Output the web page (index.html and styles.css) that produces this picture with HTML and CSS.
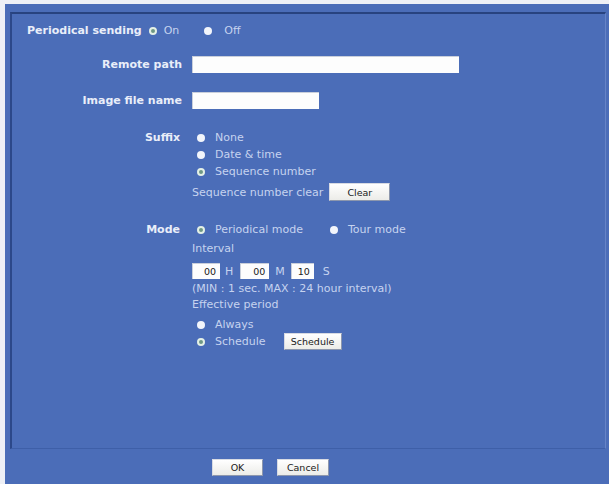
FILE: index.html
```html
<!DOCTYPE html>
<html>
<head>
<meta charset="utf-8">
<link rel="stylesheet" href="styles.css">
</head>
<body>
<div class="frame">
  <div class="panel">
    <div class="top-row">
      <span class="label-b">Periodical sending</span>
      <span class="radio on r-first"></span><span class="opt">On</span>
      <span class="radio r-off"></span><span class="opt">Off</span>
    </div>

    <div class="row row-remote">
      <div class="lbl">Remote path</div>
      <div class="content"><span class="input w-remote"></span></div>
    </div>

    <div class="row row-image">
      <div class="lbl">Image file name</div>
      <div class="content"><span class="input w-image"></span></div>
    </div>

    <div class="row row-suffix">
      <div class="lbl lbl-s">Suffix</div>
      <div class="content">
        <div class="opt-line"><span class="radio"></span><span class="opt">None</span></div>
        <div class="opt-line"><span class="radio"></span><span class="opt">Date &amp; time</span></div>
        <div class="opt-line"><span class="radio on"></span><span class="opt">Sequence number</span></div>
        <div class="clear-line"><span class="txt">Sequence number clear</span><span class="btn w-clear">Clear</span></div>
      </div>
    </div>

    <div class="row row-mode">
      <div class="lbl lbl-s">Mode</div>
      <div class="content">
        <div class="opt-line"><span class="radio on"></span><span class="opt">Periodical mode</span><span class="radio r-tour"></span><span class="opt">Tour mode</span></div>
        <div class="txt-line t-interval">Interval</div>
        <div class="time-line">
          <span class="input num n1">00</span><span class="unit u-h">H</span>
          <span class="input num n2">00</span><span class="unit u-m">M</span>
          <span class="input num n3">10</span><span class="unit u-s">S</span>
        </div>
        <div class="txt-line t-min">(MIN : 1 sec. MAX : 24 hour interval)</div>
        <div class="txt-line t-eff">Effective period</div>
        <div class="opt-line l-always"><span class="radio"></span><span class="opt">Always</span></div>
        <div class="opt-line"><span class="radio on"></span><span class="opt">Schedule</span><span class="btn w-sched">Schedule</span></div>
      </div>
    </div>
  </div>
  <div class="footer">
    <span class="btn w-ok">OK</span>
    <span class="btn w-cancel">Cancel</span>
  </div>
</div>
</body>
</html>
```

FILE: styles.css
```css
html, body {
  margin: 0;
  padding: 0;
  background: #eef0f6;
}
body {
  width: 609px;
  height: 484px;
  overflow: hidden;
  font-family: "DejaVu Sans", Verdana, sans-serif;
}
.frame {
  margin: 4px 0 0 5px;
  height: 480px;
  background: #4b6db8;
  display: flex;
  flex-direction: column;
  padding: 8px 3px 0 5px;
  box-sizing: border-box;
}
.panel {
  flex: 1;
  border-top: 2px solid #28437f;
  border-left: 2px solid #2c4889;
  border-right: 1px solid #6683c6;
  border-bottom: 1px solid #3e5fa8;
  padding: 8px 0 0 15px;
  box-sizing: border-box;
}
.top-row {
  display: flex;
  align-items: center;
  height: 17px;
}
.label-b, .lbl {
  font-weight: bold;
  font-size: 11px;
  color: #e9eef9;
}
.opt, .txt, .txt-line, .unit {
  font-size: 11px;
  color: #c6d3ef;
}
.radio {
  display: inline-block;
  width: 8px;
  height: 8px;
  border-radius: 50%;
  background: #f2f5fb;
  box-sizing: border-box;
  flex: none;
}
.radio.on {
  background: #6e9784;
  border: 2px solid #e4f0e6;
}
.r-first { margin-left: 7px; margin-right: 7px; }
.r-off { margin-left: 25px; margin-right: 12px; }

.row {
  display: flex;
}
.lbl {
  width: 155px;
  text-align: right;
  flex: none;
  line-height: 17px;
}
.lbl-s { width: 153px; margin-right: 2px; }
.content {
  margin-left: 10px;
  display: flex;
  flex-direction: column;
}
.row-remote { margin-top: 17px; }
.row-image { margin-top: 19px; }
.row-suffix { margin-top: 20px; }
.row-mode { margin-top: 20px; }

.input {
  display: block;
  height: 17px;
  background: #fdfdfd;
  border-top: 1px solid #c9cfdb;
  border-left: 1px solid #c9cfdb;
  box-sizing: border-box;
}
.w-remote { width: 267px; }
.w-image { width: 127px; }

.opt-line {
  display: flex;
  align-items: center;
  height: 17px;
}
.opt-line .radio { margin-left: 5px; margin-right: 10px; }
.opt-line .radio.r-tour { margin-left: 27px; margin-right: 10px; }

.clear-line {
  display: flex;
  align-items: center;
  margin-top: 3px;
  height: 18px;
}
.btn {
  display: inline-flex;
  align-items: center;
  justify-content: center;
  height: 18px;
  box-sizing: border-box;
  background: linear-gradient(#ffffff, #ecece8);
  border: 1px solid #d8dbe3;
  border-right-color: #8d97ad;
  border-bottom-color: #8d97ad;
  font-family: "DejaVu Sans", Tahoma, sans-serif;
  font-size: 9.5px;
  color: #202020;
}
.w-clear { width: 61px; margin-left: 6px; }
.w-sched { width: 58px; height: 17px; margin-left: 18px; }

.txt-line { line-height: 14px; }
.t-interval { margin-top: 4px; }
.time-line {
  display: flex;
  align-items: center;
  margin-top: 7px;
  height: 16px;
}
.num {
  height: 16px;
  font-size: 9.5px;
  color: #202020;
  text-align: right;
  line-height: 15px;
  padding-right: 4px;
}
.n1 { width: 28px; }
.n2 { width: 29px; }
.n3 { width: 23px; }
.u-h { margin: 0 7px 0 5px; }
.u-m { margin: 0 6px 0 6px; }
.u-s { margin-left: 9px; }
.t-min { margin-top: 3px; }
.t-eff { margin-top: 2px; }
.l-always { margin-top: 4px; }

.footer {
  height: 35px;
  display: flex;
  align-items: center;
  padding-left: 202px;
  padding-top: 1px;
  box-sizing: border-box;
}
.footer .btn { height: 17px; }
.w-ok { width: 51px; }
.w-cancel { width: 52px; margin-left: 14px; }
```
